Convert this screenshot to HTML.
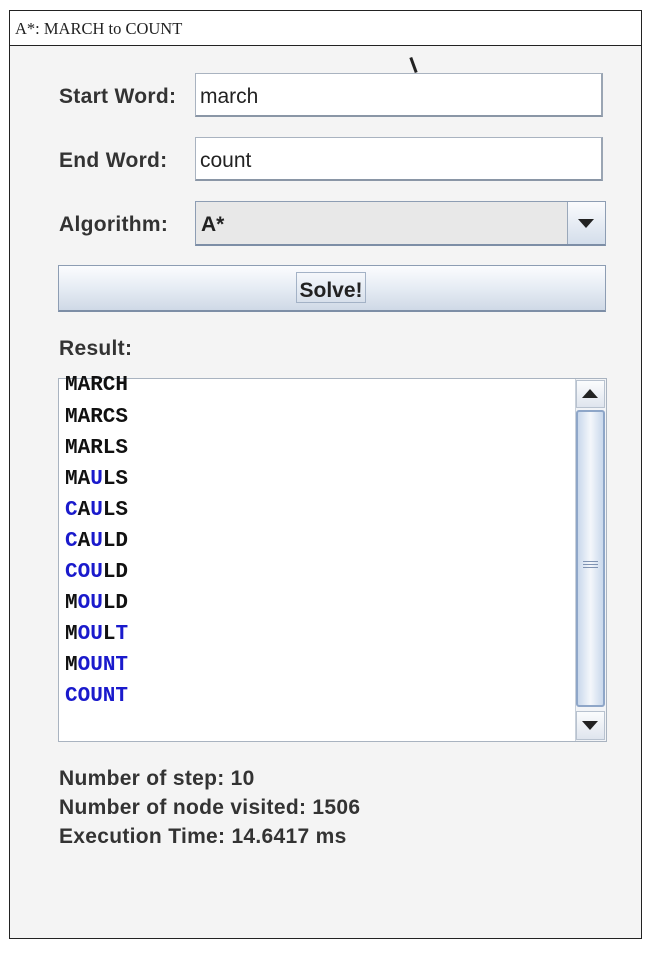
<!DOCTYPE html>
<html><head><style>
*{margin:0;padding:0;box-sizing:border-box}
body{width:658px;height:954px;background:#fff;position:relative;overflow:hidden;font-family:"Liberation Sans",sans-serif}
.a{position:absolute}
.lbl{font-weight:bold;font-size:21px;letter-spacing:0.3px;color:#333}
.tf{background:#fff;border:1px solid #a9b3c0;border-bottom:2px solid #8a96a6;border-right:2px solid #9aa5b3;font-size:21px;color:#222;padding-left:4px;line-height:46px}
.row{position:absolute;left:65px;font-family:"Liberation Mono",monospace;font-weight:bold;font-size:21px;color:#111;line-height:20px}
.b{color:#1a1acc}
</style></head><body>
<div class="a" style="left:9px;top:10px;width:633px;height:929px;border:1px solid #222;background:#f4f4f4"></div>
<div class="a" style="left:10px;top:11px;width:631px;height:35px;background:#fff;border-bottom:1px solid #222"></div>
<div class="a" style="left:15px;top:19px;font-family:'Liberation Serif',serif;font-size:16.5px;color:#222">A*: MARCH to COUNT</div>
<div class="a" style="left:412px;top:57px;width:3px;height:16px;background:#222;transform:rotate(-20deg)"></div>

<div class="a lbl" style="left:59px;top:85px">Start Word:</div>
<div class="a tf" style="left:195px;top:73px;width:408px;height:44px">march</div>
<div class="a lbl" style="left:59px;top:149px">End Word:</div>
<div class="a tf" style="left:195px;top:137px;width:408px;height:44px">count</div>
<div class="a lbl" style="left:59px;top:213px">Algorithm:</div>
<div class="a" style="left:195px;top:201px;width:411px;height:45px;background:#e8e8e8;border:1px solid #8d9db3;border-bottom:2px solid #7d8ea6"></div>
<div class="a" style="left:201px;top:213px;font-weight:bold;font-size:21px;color:#222">A*</div>
<div class="a" style="left:567px;top:202px;width:38px;height:42px;border-left:1px solid #9aa8ba;background:linear-gradient(#fafbfd,#d4deeb)"></div>
<div class="a" style="left:578px;top:219px;width:0;height:0;border-left:8px solid transparent;border-right:8px solid transparent;border-top:9px solid #222"></div>

<div class="a" style="left:58px;top:265px;width:548px;height:47px;border:1px solid #8d9db3;border-bottom:2px solid #7d8ea6;background:linear-gradient(#fbfcfe,#e6ecf4 50%,#cfd9e6)"></div>
<div class="a" style="left:296px;top:272px;width:70px;height:31px;border:1px solid #a3b2c6;font-weight:bold;font-size:21px;color:#222;text-align:center;line-height:35px">Solve!</div>

<div class="a lbl" style="left:59px;top:337px">Result:</div>
<div class="a" style="left:58px;top:378px;width:549px;height:364px;background:#fff;border:1px solid #a9b3c0;overflow:hidden">
</div>
<div class="row" style="top:376px">MARCH</div>
<div class="row" style="top:408px">MARCS</div>
<div class="row" style="top:439px">MARLS</div>
<div class="row" style="top:470px">MA<span class="b">U</span>LS</div>
<div class="row" style="top:501px"><span class="b">C</span>A<span class="b">U</span>LS</div>
<div class="row" style="top:532px"><span class="b">C</span>A<span class="b">U</span>LD</div>
<div class="row" style="top:563px"><span class="b">COU</span>LD</div>
<div class="row" style="top:594px">M<span class="b">OU</span>LD</div>
<div class="row" style="top:625px">M<span class="b">OU</span>L<span class="b">T</span></div>
<div class="row" style="top:656px">M<span class="b">OUNT</span></div>
<div class="row" style="top:687px"><span class="b">COUNT</span></div>
<div class="a" style="left:575px;top:379px;width:31px;height:362px;background:#f2f4f7;border-left:1px solid #c8d0da"></div>
<div class="a" style="left:576px;top:380px;width:29px;height:28px;background:linear-gradient(#fbfcfd,#dfe5ee);border:1px solid #b8c2cf"></div>
<div class="a" style="left:582px;top:389px;width:0;height:0;border-left:8px solid transparent;border-right:8px solid transparent;border-bottom:9px solid #222"></div>
<div class="a" style="left:576px;top:410px;width:29px;height:297px;border:2px solid #8ea6c8;border-radius:3px;background:linear-gradient(90deg,#c9d8ec,#f4f7fb 50%,#c9d8ec)"></div>
<div class="a" style="left:583px;top:561px;width:15px;height:1px;background:#7f93b3;box-shadow:0 3px 0 #7f93b3,0 6px 0 #7f93b3"></div>
<div class="a" style="left:576px;top:711px;width:29px;height:29px;background:linear-gradient(#fbfcfd,#dfe5ee);border:1px solid #b8c2cf"></div>
<div class="a" style="left:582px;top:721px;width:0;height:0;border-left:8px solid transparent;border-right:8px solid transparent;border-top:9px solid #222"></div>

<div class="a lbl" style="left:59px;top:767px">Number of step: 10</div>
<div class="a lbl" style="left:59px;top:796px">Number of node visited: 1506</div>
<div class="a lbl" style="left:59px;top:825px">Execution Time: 14.6417 ms</div>
</body></html>
